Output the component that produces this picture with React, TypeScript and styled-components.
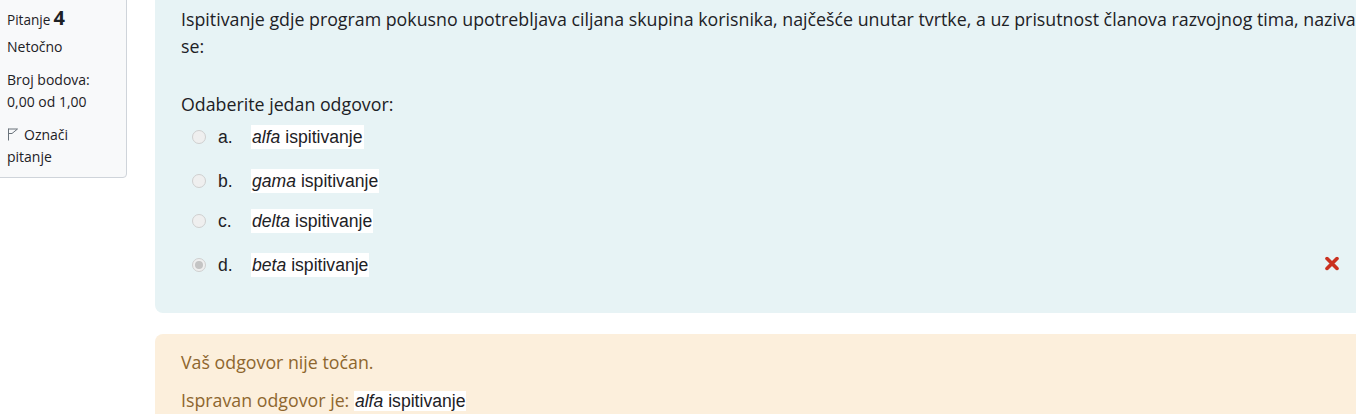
import React from "react";
import styled, { createGlobalStyle } from "styled-components";

const Global = createGlobalStyle`
  html, body { margin: 0; padding: 0; background: #fff; overflow: hidden; }
  body { font-family: "Open Sans", "Noto Sans", sans-serif; color: #1d2125; }
`;

const Page = styled.div`
  display: flex;
  align-items: flex-start;
  margin-top: -10px;
  width: 1500px;
`;

const Info = styled.div`
  flex: 0 0 auto;
  width: 112px;
  margin-left: -1px;
  padding: 17px 7px 9px 7px;
  background: #f8f9fa;
  border: 1px solid #cfd4da;
  border-radius: 0 0 4px 0;
  font-size: 14px;
  line-height: 22px;
  color: #1d2125;
`;

const QNo = styled.div`
  font-size: 13.6px;
  line-height: 20px;
  margin-bottom: 6px;
  span { font-size: 20px; font-weight: 700; margin-left: 3px; }
`;

const InfoLine = styled.div<{ $gap?: number }>`
  margin-bottom: ${(p) => p.$gap ?? 0}px;
`;

const FlagLine = styled.div`
  max-width: 96px;
  svg { vertical-align: -1px; margin-right: 5px; }
`;

const Content = styled.div`
  margin-left: 28px;
  width: 1240px;
  display: flex;
  flex-direction: column;
`;

const Formulation = styled.div`
  background: #e7f3f5;
  border-radius: 8px;
  padding: 16px 26px 33px 26px;
  font-size: 17.8px;
  line-height: 27px;
`;

const QText = styled.p`
  margin: 0;
`;

const Prompt = styled.div`
  margin-top: 31px;
`;

const Answers = styled.div`
  display: flex;
  flex-direction: column;
`;

const Row = styled.div<{ $mt: number }>`
  display: flex;
  align-items: center;
  height: 30px;
  margin-top: ${(p) => p.$mt}px;
  padding-left: 11px;
  position: relative;
`;

const Radio = styled.span<{ $checked?: boolean }>`
  flex: 0 0 auto;
  width: 14px;
  height: 14px;
  box-sizing: border-box;
  border-radius: 50%;
  border: 1px solid #cfcfcf;
  background: #efefef;
  display: inline-flex;
  align-items: center;
  justify-content: center;
  &::after {
    content: "";
    display: ${(p) => (p.$checked ? "block" : "none")};
    width: 8px;
    height: 8px;
    border-radius: 50%;
    background: #c4c4c4;
  }
`;

const Letter = styled.span`
  margin-left: 12px;
  width: 33px;
  font-family: "Liberation Sans", Arial, sans-serif;
  font-size: 17.6px;
`;

const AnsText = styled.span`
  font-family: "Liberation Sans", Arial, sans-serif;
  font-size: 17.6px;
  line-height: 24px;
  background: #fff;
  color: #1d2125;
  padding: 0 1px;
`;

const Wrong = styled.span`
  position: absolute;
  left: 1144px;
  top: 50%;
  transform: translateY(-60%);
  display: inline-flex;
`;

const Feedback = styled.div`
  margin-top: 21px;
  background: #fcefdc;
  border-radius: 8px 0 0 0;
  padding: 15px 26px 20px 26px;
  color: #8e662e;
  font-size: 17.8px;
  line-height: 27px;
`;

const FbLine = styled.div<{ $gap?: number }>`
  margin-bottom: ${(p) => p.$gap ?? 0}px;
`;

const InlineAns = styled.span`
  font-family: "Liberation Sans", Arial, sans-serif;
  font-size: 17.6px;
  line-height: 24px;
  background: #fff;
  color: #1d2125;
  padding: 0 1px;
`;

const Flag = () => (
  <svg width="12" height="13" viewBox="0 0 12 13" fill="none" stroke="#6a737b" strokeWidth="1">
    <path d="M1.5 0.5 V12.5" />
    <path d="M1.5 1 L10.5 1 L5 5.5 L1.5 5.5" strokeLinejoin="round" />
  </svg>
);

const XIcon = () => (
  <svg width="14" height="14" viewBox="0 0 14 14">
    <path d="M2 2 L12 12 M12 2 L2 12" stroke="#ca3120" strokeWidth="3.6" strokeLinecap="round" />
  </svg>
);

const answers = [
  { l: "a.", w: "alfa", mt: 4 },
  { l: "b.", w: "gama", mt: 14 },
  { l: "c.", w: "delta", mt: 10 },
  { l: "d.", w: "beta", mt: 14, checked: true },
];

export default function App() {
  return (
    <>
      <Global />
      <Page>
        <Info>
          <QNo>
            Pitanje<span>4</span>
          </QNo>
          <InfoLine $gap={11}>Netočno</InfoLine>
          <InfoLine>Broj bodova:</InfoLine>
          <InfoLine $gap={11}>0,00 od 1,00</InfoLine>
          <FlagLine>
            <Flag />
            Označi pitanje
          </FlagLine>
        </Info>
        <Content>
          <Formulation>
            <QText>
              Ispitivanje gdje program pokusno upotrebljava ciljana skupina korisnika, najčešće unutar tvrtke, a uz
              prisutnost članova razvojnog tima, naziva se:
            </QText>
            <Prompt>Odaberite jedan odgovor:</Prompt>
            <Answers>
              {answers.map((a) => (
                <Row key={a.l} $mt={a.mt}>
                  <Radio $checked={a.checked} />
                  <Letter>{a.l}</Letter>
                  <AnsText>
                    <em>{a.w}</em> ispitivanje
                  </AnsText>
                  {a.checked && (
                    <Wrong>
                      <XIcon />
                    </Wrong>
                  )}
                </Row>
              ))}
            </Answers>
          </Formulation>
          <Feedback>
            <FbLine $gap={11}>Vaš odgovor nije točan.</FbLine>
            <FbLine>
              Ispravan odgovor je:{" "}
              <InlineAns>
                <em>alfa</em> ispitivanje
              </InlineAns>
            </FbLine>
          </Feedback>
        </Content>
      </Page>
    </>
  );
}
